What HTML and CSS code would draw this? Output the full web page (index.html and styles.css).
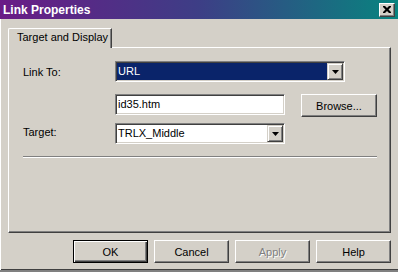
FILE: index.html
```html
<!DOCTYPE html>
<html lang="en">
<head>
    <meta charset="UTF-8">
    <title>Link Properties</title>
    <link rel="stylesheet" href="styles.css">
</head>
<body>
    <div class="window">
        <div class="titlebar">
            <span class="title">Link Properties</span>
            <button class="close-btn">
                <svg viewBox="0 0 8 7" width="8" height="7">
                    <path d="M0 0h2l2 2 2-2h2v1l-2.5 2.5L8 6v1H6L4 5 2 7H0V6l2.5-2.5L0 1z"/>
                </svg>
            </button>
        </div>

        <div class="dialog-body">
            <div class="tab-strip">
                <div class="tab tab-active">Target and Display</div>
            </div>

            <div class="tab-panel">
                <div class="field-row row-link">
                    <span class="field-label">Link To:</span>
                    <div class="combo combo-wide">
                        <span class="combo-value combo-selected">URL</span>
                        <span class="combo-arrow">
                            <svg viewBox="0 0 7 4" width="7" height="4"><path d="M0 0h7L3.5 4z"/></svg>
                        </span>
                    </div>
                </div>

                <div class="field-row row-url">
                    <span class="field-label"></span>
                    <div class="textbox">id35.htm</div>
                    <button class="btn btn-browse">Browse...</button>
                </div>

                <div class="field-row row-target">
                    <span class="field-label label-raised">Target:</span>
                    <div class="combo combo-narrow">
                        <span class="combo-value">TRLX_Middle</span>
                        <span class="combo-arrow">
                            <svg viewBox="0 0 7 4" width="7" height="4"><path d="M0 0h7L3.5 4z"/></svg>
                        </span>
                    </div>
                </div>

                <div class="separator"></div>
            </div>

            <div class="button-bar">
                <button class="btn btn-default">OK</button>
                <button class="btn">Cancel</button>
                <button class="btn btn-disabled">Apply</button>
                <button class="btn">Help</button>
            </div>
        </div>
    </div>
</body>
</html>
```

FILE: styles.css
```css
* {
    margin: 0;
    padding: 0;
    box-sizing: border-box;
}

body {
    font-family: 'Liberation Sans', Arial, sans-serif;
    font-size: 11px;
    color: #000;
    background: #d4d0c8;
}

.window {
    width: 398px;
    height: 272px;
    background: #d4d0c8;
    border-bottom: 2px solid #808080;
    box-shadow: inset 0 -1px #404040;
}

/* Title bar */
.titlebar {
    height: 19px;
    display: flex;
    align-items: center;
    justify-content: space-between;
    padding: 0 3px;
    background: linear-gradient(to right, #6a1b86 0%, #3d3e86 50%, #08847f 100%);
}

.title {
    color: #fff;
    font-weight: bold;
    font-size: 12px;
}

.close-btn {
    width: 16px;
    height: 14px;
    display: flex;
    align-items: center;
    justify-content: center;
    background: #d4d0c8;
    border: 1px solid;
    border-color: #fff #404040 #404040 #fff;
    box-shadow: inset -1px -1px #808080;
}

.close-btn svg {
    fill: #000;
}

/* Dialog body */
.dialog-body {
    height: 251px;
    padding: 9px 7px 0 7px;
    border-left: 1px solid #fff;
}

.tab-strip {
    display: flex;
}

.tab {
    position: relative;
    z-index: 1;
    height: 20px;
    margin-bottom: -1px;
    padding: 1px 3px 0 8px;
    line-height: 14px;
    background: #d4d0c8;
    border: 1px solid;
    border-bottom: none;
    border-color: #fff #404040 #fff #fff;
    border-top-left-radius: 2px;
    box-shadow: inset -1px 0 #808080;
}

.tab-panel {
    height: 186px;
    border: 1px solid;
    border-color: #fff #404040 #404040 #fff;
    box-shadow: inset -1px -1px #808080;
}

/* Form rows */
.field-row {
    display: flex;
    align-items: center;
    padding-left: 14px;
}

.row-link {
    margin-top: 13px;
}

.row-url {
    margin-top: 12px;
    align-items: flex-start;
}

.row-target {
    margin-top: 6px;
}

.field-label {
    width: 92px;
}

.label-raised {
    padding-bottom: 4px;
}

.combo,
.textbox {
    height: 21px;
    padding: 1px;
    background: #fff;
    border: 1px solid;
    border-color: #808080 #fff #fff #808080;
    box-shadow: inset 1px 1px #404040, inset -1px -1px #d4d0c8;
}

.combo {
    display: flex;
}

.combo-wide {
    width: 230px;
}

.combo-narrow {
    width: 170px;
}

.combo-value {
    flex: 1;
    padding-left: 1px;
    line-height: 17px;
}

.combo-selected {
    background: #0a246a;
    color: #fff;
}

.combo-arrow {
    width: 16px;
    height: 17px;
    display: flex;
    align-items: center;
    justify-content: center;
    background: #d4d0c8;
    border: 1px solid;
    border-color: #d4d0c8 #404040 #404040 #d4d0c8;
    box-shadow: inset 1px 1px #fff, inset -1px -1px #808080;
}

.combo-arrow svg {
    fill: #000;
}

.textbox {
    width: 170px;
    padding-left: 2px;
    line-height: 17px;
}

.separator {
    width: 354px;
    height: 2px;
    margin: 12px 0 0 14px;
    border-top: 1px solid #808080;
    border-bottom: 1px solid #fff;
}

/* Buttons */
.btn {
    width: 75px;
    height: 23px;
    font-family: inherit;
    font-size: 11px;
    color: #000;
    background: #d4d0c8;
    border: 1px solid;
    border-color: #fff #404040 #404040 #fff;
    box-shadow: inset -1px -1px #808080;
}

.btn-browse {
    width: 76px;
    margin-left: 16px;
}

.btn-default {
    border-color: #000;
    box-shadow: inset 1px 1px #fff, inset -1px -1px #404040, inset -2px -2px #808080;
}

.btn-disabled {
    color: #808080;
    text-shadow: 1px 1px #fff;
}

.button-bar {
    display: flex;
    justify-content: flex-end;
    gap: 6px;
    margin-top: 7px;
}
```
